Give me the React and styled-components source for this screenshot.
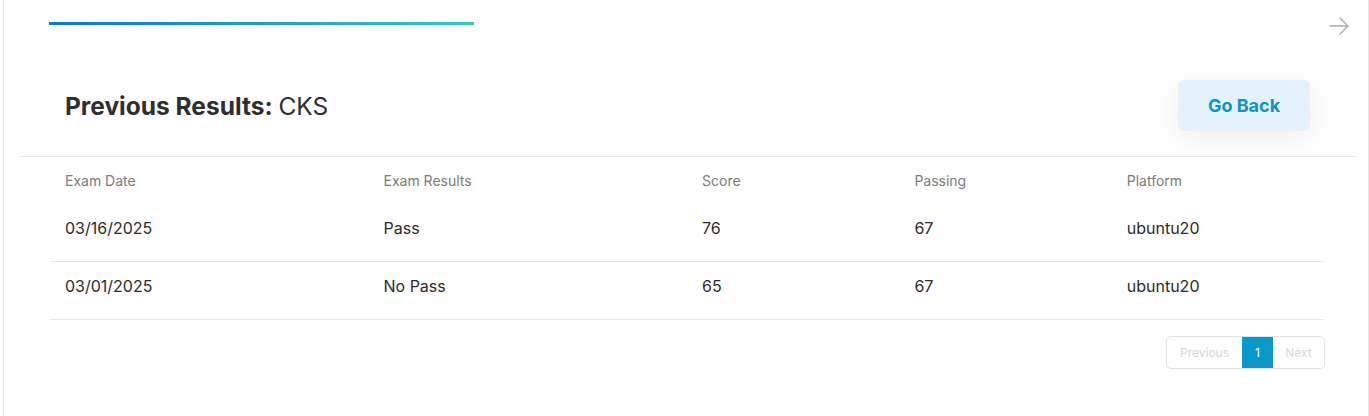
import React from "react";
import styled, { createGlobalStyle } from "styled-components";

const Global = createGlobalStyle`
  html, body { margin: 0; padding: 0; background: #fff; }
  body { font-family: Inter, "Noto Sans", sans-serif; color: #2b2b2b; overflow: hidden; }
`;

const Page = styled.div`
  padding-left: 3px;
  height: 416px;
  overflow: hidden;
`;

const Card = styled.div`
  margin-top: -8px;
  width: 1366px;
  box-sizing: border-box;
  border: 1px solid #e6e6e6;
  border-radius: 8px;
  background: #fff;
  height: 440px;
`;

const TopRow = styled.div`
  display: flex;
  justify-content: space-between;
  align-items: flex-start;
  padding: 29px 19px 0 45px;
  height: 33px;
  box-sizing: border-box;
  margin-bottom: 29px;
`;

const Progress = styled.div`
  width: 425px;
  height: 3px;
  background: linear-gradient(90deg, #0577de 0%, #2fcbc8 100%);
`;

const ArrowIcon = styled.svg`
  width: 20px;
  height: 20px;
  margin-top: -6px;
  color: #ababab;
`;

const Header = styled.div`
  margin: 0 13px 0 16px;
  padding: 25px 45px;
  display: flex;
  justify-content: space-between;
  align-items: center;
  border-bottom: 1px solid #e8e8e8;
`;

const Title = styled.h2`
  margin: 0;
  font-size: 24.5px;
  line-height: 30px;
  font-weight: 700;
  color: #2e2e2e;
  span { font-weight: 400; }
`;

const BackButton = styled.button`
  width: 132px;
  height: 51px;
  border: none;
  border-radius: 6px;
  background: #e4f2fb;
  color: #0b95c9;
  font-family: Inter, "Noto Sans", sans-serif;
  font-size: 18px;
  font-weight: 700;
  box-shadow: 0 8px 30px rgba(0, 0, 0, 0.07);
  cursor: pointer;
`;

const TableWrap = styled.div`
  margin: 0 43px 0 46px;
`;

const Table = styled.table`
  width: 1274px;
  border-collapse: collapse;
  table-layout: fixed;
`;

const Th = styled.th`
  text-align: left;
  font-weight: 400;
  font-size: 14px;
  line-height: 20px;
  color: #7b7b7b;
  padding: 14px 15px 13px;
`;

const Tr = styled.tr`
  border-bottom: 1px solid #e6e6e6;
`;

const Td = styled.td`
  font-size: 16px;
  line-height: 24px;
  color: #2b2b2b;
  padding: 12px 15px 21px;
`;

const Pager = styled.div`
  display: flex;
  justify-content: flex-end;
  margin-top: 16px;
`;

const PagerGroup = styled.div`
  display: flex;
  border: 1px solid #dfe3e8;
  border-radius: 5px;
  overflow: hidden;
  height: 33px;
  box-sizing: border-box;
`;

const PageBtn = styled.div`
  display: flex;
  align-items: center;
  justify-content: center;
  width: ${(p) => p.$w}px;
  font-size: 12px;
  color: ${(p) => (p.$active ? "#fff" : "#d3d7de")};
  background: ${(p) => (p.$active ? "#0a99cb" : "transparent")};
`;

const rows = [
  ["03/16/2025", "Pass", "76", "67", "ubuntu20"],
  ["03/01/2025", "No Pass", "65", "67", "ubuntu20"],
];

export default function App() {
  return (
    <Page>
      <Global />
      <Card>
        <TopRow>
          <Progress />
          <ArrowIcon viewBox="0 0 20 20" fill="none" stroke="currentColor" strokeWidth="1.4" strokeLinecap="round" strokeLinejoin="round">
            <path d="M1 10h18M11 2l8 8-8 8" />
          </ArrowIcon>
        </TopRow>
        <Header>
          <Title>
            Previous Results: <span>CKS</span>
          </Title>
          <BackButton>Go Back</BackButton>
        </Header>
        <TableWrap>
          <Table>
            <colgroup>
              <col style={{ width: "25%" }} />
              <col style={{ width: "25%" }} />
              <col style={{ width: "16.67%" }} />
              <col style={{ width: "16.67%" }} />
              <col style={{ width: "16.66%" }} />
            </colgroup>
            <thead>
              <tr>
                <Th>Exam Date</Th>
                <Th>Exam Results</Th>
                <Th>Score</Th>
                <Th>Passing</Th>
                <Th>Platform</Th>
              </tr>
            </thead>
            <tbody>
              {rows.map((r, i) => (
                <Tr key={i}>
                  {r.map((c, j) => (
                    <Td key={j}>{c}</Td>
                  ))}
                </Tr>
              ))}
            </tbody>
          </Table>
          <Pager>
            <PagerGroup>
              <PageBtn $w={75}>Previous</PageBtn>
              <PageBtn $w={31} $active>1</PageBtn>
              <PageBtn $w={51}>Next</PageBtn>
            </PagerGroup>
          </Pager>
        </TableWrap>
      </Card>
    </Page>
  );
}
